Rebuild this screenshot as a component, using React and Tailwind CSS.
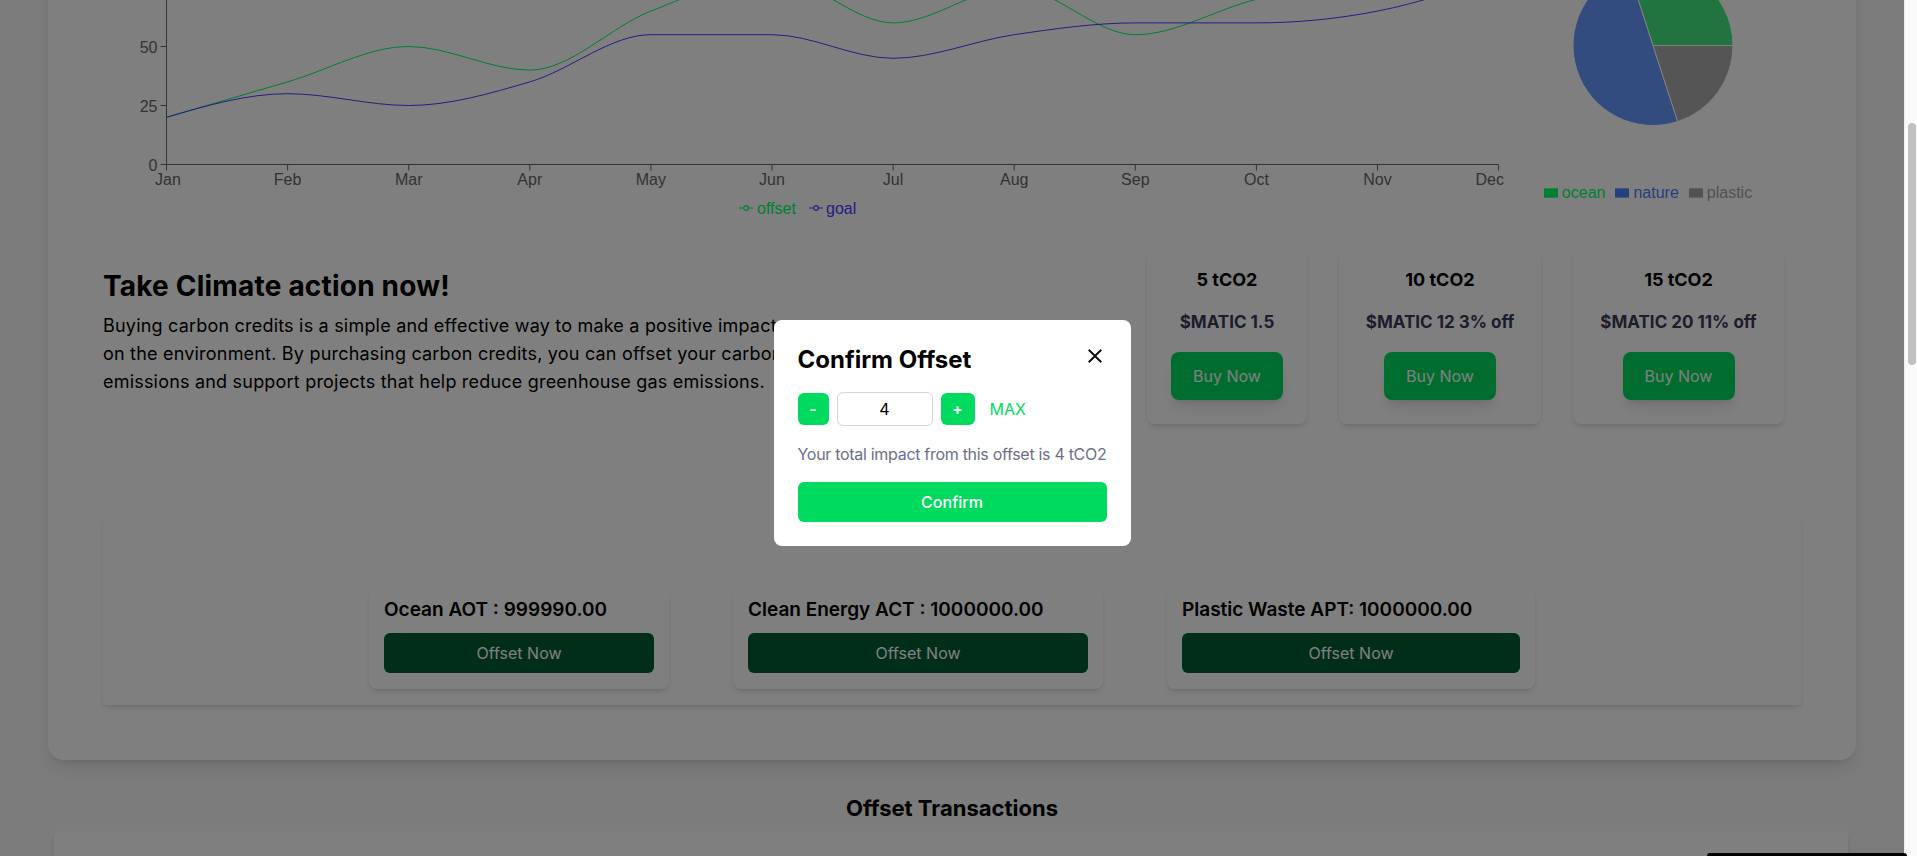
import React from "react";

const months = ["Jan", "Feb", "Mar", "Apr", "May", "Jun", "Jul", "Aug", "Sep", "Oct", "Nov", "Dec"];
const offsetData = [20, 35, 50, 40, 65, 80, 60, 75, 55, 70, 80, 90];
const goalData = [20, 30, 25, 35, 55, 55, 45, 55, 60, 60, 65, 80];
const X0 = 118.5;
const DX = 121.1;
const Y0 = 314.5;
const K = 2.36;
const px = (i) => X0 + i * DX;
const py = (v) => Y0 - v * K;

function monotonePath(vals) {
  const pts = vals.map((v, i) => [px(i), py(v)]);
  const n = pts.length;
  const s = [];
  for (let i = 0; i < n - 1; i++) s.push((pts[i + 1][1] - pts[i][1]) / (pts[i + 1][0] - pts[i][0]));
  const t = new Array(n).fill(0);
  for (let i = 1; i < n - 1; i++) {
    const h0 = pts[i][0] - pts[i - 1][0];
    const h1 = pts[i + 1][0] - pts[i][0];
    const s0 = s[i - 1];
    const s1 = s[i];
    const p = (s0 * h1 + s1 * h0) / (h0 + h1);
    t[i] = (Math.sign(s0) + Math.sign(s1)) * Math.min(Math.abs(s0), Math.abs(s1), 0.5 * Math.abs(p)) || 0;
  }
  t[0] = (3 * s[0] - t[1]) / 2;
  t[n - 1] = (3 * s[n - 2] - t[n - 2]) / 2;
  let d = `M${pts[0][0]},${pts[0][1]}`;
  for (let i = 0; i < n - 1; i++) {
    const dx = (pts[i + 1][0] - pts[i][0]) / 3;
    d += `C${pts[i][0] + dx},${pts[i][1] + dx * t[i]},${pts[i + 1][0] - dx},${pts[i + 1][1] - dx * t[i + 1]},${pts[i + 1][0]},${pts[i + 1][1]}`;
  }
  return d;
}

function LineChart() {
  const yTicks = [0, 25, 50, 75, 100];
  return (
    <svg width="1480" height="380" className="shrink-0" style={{ fontFamily: '"Liberation Sans", Arial, sans-serif' }}>
      {/* y axis */}
      <line x1={X0} y1={py(100)} x2={X0} y2={Y0} stroke="#666" strokeWidth="1" />
      {yTicks.map((v) => (
        <g key={v}>
          <line x1={X0 - 6} y1={py(v)} x2={X0} y2={py(v)} stroke="#666" />
          {v <= 50 && (
            <text x={X0 - 9} y={py(v) + 6} textAnchor="end" fontSize="16" fill="#666">
              {v}
            </text>
          )}
        </g>
      ))}
      {/* x axis */}
      <line x1={X0} y1={Y0} x2={px(11)} y2={Y0} stroke="#666" />
      {months.map((m, i) => (
        <g key={m}>
          <line x1={px(i)} y1={Y0} x2={px(i)} y2={Y0 + 6} stroke="#666" />
          <text
            x={i === 11 ? 1456 : i === 0 ? px(0) + 1.5 : px(i)}
            y={Y0 + 20}
            textAnchor={i === 11 ? "end" : "middle"}
            fontSize="16"
            fill="#666"
          >
            {m}
          </text>
        </g>
      ))}
      <path d={monotonePath(offsetData)} fill="none" stroke="#00ff66" strokeWidth="1" />
      <path d={monotonePath(goalData)} fill="none" stroke="#4a3aff" strokeWidth="1" />
      {/* legend */}
      <g transform="translate(691,351)">
        <path d="M0,7h4.67A2.33,2.33,0,1,1,9.33,7H14M9.33,7A2.33,2.33,0,1,1,4.67,7" fill="none" stroke="#00ff66" strokeWidth="1.2" />
      </g>
      <text x="709" y="363.5" fontSize="16" fill="#00ff66">offset</text>
      <g transform="translate(761,351)">
        <path d="M0,7h4.67A2.33,2.33,0,1,1,9.33,7H14M9.33,7A2.33,2.33,0,1,1,4.67,7" fill="none" stroke="#4a3aff" strokeWidth="1.2" />
      </g>
      <text x="778" y="363.5" fontSize="16" fill="#4a3aff">goal</text>
    </svg>
  );
}

function slice(cx, cy, r, a1, a2) {
  const rad = (a) => (a * Math.PI) / 180;
  const p = (a) => [cx + r * Math.cos(rad(a)), cy - r * Math.sin(rad(a))];
  const [x1, y1] = p(a1);
  const [x2, y2] = p(a2);
  const large = a2 - a1 > 180 ? 1 : 0;
  return `M${cx},${cy}L${x1},${y1}A${r},${r},0,${large},0,${x2},${y2}Z`;
}

function PieArea() {
  const cx = 125;
  const cy = 195.5;
  const r = 80;
  const legend = [
    { label: "ocean", color: "#00ff60" },
    { label: "nature", color: "#4c80ff" },
    { label: "plastic", color: "#a4a4a4" },
  ];
  return (
    <div className="w-[250px] shrink-0 flex flex-col items-center">
      <svg width="250" height="300">
        <path d={slice(cx, cy, r, 0, 108)} fill="#42e680" stroke="#fff" strokeWidth="1" />
        <path d={slice(cx, cy, r, 108, 288)} fill="#6698ff" stroke="#fff" strokeWidth="1" />
        <path d={slice(cx, cy, r, 288, 360)} fill="#aaaaaa" stroke="#fff" strokeWidth="1" />
      </svg>
      <div className="mt-[31px] flex items-center h-6 text-[16px]" style={{ fontFamily: '"Liberation Sans", Arial, sans-serif' }}>
        {legend.map((l) => (
          <span key={l.label} className="flex items-center mr-[10px]" style={{ color: l.color }}>
            <svg width="14" height="14" className="mr-1">
              <path d="M0,2.33h14v9.33h-14z" fill={l.color} />
            </svg>
            {l.label}
          </span>
        ))}
      </div>
    </div>
  );
}

function PriceCard({ w, title, price }) {
  return (
    <div className={`${w} bg-white rounded-lg shadow-md flex flex-col items-center pt-4 pb-6`}>
      <div className="text-lg leading-7 font-bold text-black">{title}</div>
      <div className="mt-4 text-[17px] leading-6 font-bold text-[#3a3a58] whitespace-nowrap">{price}</div>
      <button className="mt-[18px] w-28 h-12 rounded-lg bg-[#00da5f] text-white text-base shadow-lg">Buy Now</button>
    </div>
  );
}

function TokenCard({ w, title }) {
  return (
    <div className={`${w} bg-white rounded-lg shadow-md px-[15px] pt-[9px] pb-4`}>
      <div className="text-[19px] leading-7 font-semibold text-black whitespace-nowrap">{title}</div>
      <button className="mt-[9px] w-full h-10 rounded-md bg-[#005c30] text-white text-base">Offset Now</button>
    </div>
  );
}

export default function App() {
  return (
    <div className="relative w-[1917px] h-[856px] overflow-hidden flex" style={{ fontFamily: "Inter, 'Noto Sans', sans-serif" }}>
      <div className="relative w-[1904px] h-full overflow-hidden bg-[#f6f8f6] shrink-0">
        <div className="-mt-[150px]">
          {/* main card */}
          <div className="mx-12 bg-white rounded-2xl shadow-lg pb-[55px]">
            <div className="flex h-[380px]">
              <LineChart />
              <PieArea />
            </div>
            <div className="mt-5 flex items-start justify-between pl-[55px] pr-[72px]">
              <div className="mt-[19px] w-[700px]">
                <h2 className="text-[28px] leading-[35px] font-bold text-black tracking-[0.2px]">Take Climate action now!</h2>
                <p className="mt-2 text-lg leading-7 text-black tracking-[0.2px]">
                  Buying carbon credits is a simple and effective way to make a positive impact on the environment. By purchasing carbon credits, you can offset your carbon emissions and support projects that help reduce greenhouse gas emissions.
                </p>
              </div>
              <div className="flex gap-8">
                <PriceCard w="w-[160px]" title="5 tCO2" price="$MATIC 1.5" />
                <PriceCard w="w-[202px]" title="10 tCO2" price="$MATIC 12 3% off" />
                <PriceCard w="w-[211px]" title="15 tCO2" price="$MATIC 20 11% off" />
              </div>
            </div>
            <div className="mt-[93px] mx-[55px] bg-white shadow-md rounded-sm pt-[70px] pb-4 flex justify-center gap-16">
              <TokenCard w="w-[300px]" title="Ocean AOT : 999990.00" />
              <TokenCard w="w-[370px]" title="Clean Energy ACT : 1000000.00" />
              <TokenCard w="w-[368px]" title="Plastic Waste APT: 1000000.00" />
            </div>
          </div>
          <h3 className="mt-[34px] text-[22px] leading-7 font-bold text-center text-black">Offset Transactions</h3>
          <div className="mt-[9px] ml-[54px] mr-[56px] h-[200px] bg-white rounded-md shadow-md" />
        </div>

        {/* overlay */}
        <div className="absolute inset-0 bg-black/50" />

        {/* modal */}
        <div className="absolute inset-0 flex justify-center items-start pt-[320px]">
          <div className="w-[357px] bg-white rounded-lg p-6">
            <div className="flex items-start justify-between">
              <h2 className="text-2xl leading-8 font-bold text-black">Confirm Offset</h2>
              <svg width="24" height="24" viewBox="0 0 24 24">
                <path d="M19 6.41 17.59 5 12 10.59 6.41 5 5 6.41 10.59 12 5 17.59 6.41 19 12 13.41 17.59 19 19 17.59 13.41 12z" fill="#111" />
              </svg>
            </div>
            <div className="mt-4 flex items-center h-[34px]">
              <button className="w-[31px] h-8 rounded-md bg-[#00da5f] text-white font-semibold text-base">-</button>
              <input
                readOnly
                value="4"
                className="ml-2 w-[96px] h-[34px] border border-[#d6d6e0] rounded-md text-center text-base text-black outline-none"
              />
              <button className="ml-2 w-[34px] h-8 rounded-md bg-[#00da5f] text-white font-semibold text-base">+</button>
              <span className="ml-[15px] text-base text-[#00da5f]">MAX</span>
            </div>
            <p className="mt-4 text-base leading-6 text-[#6c6f86] whitespace-nowrap tracking-[-0.3px]">Your total impact from this offset is 4 tCO2</p>
            <button className="mt-4 w-full h-10 rounded-md bg-[#00da5f] text-white text-base font-medium">Confirm</button>
          </div>
        </div>
      </div>

      {/* scrollbar */}
      <div className="w-[13px] h-full bg-[#fafafa] border-l border-[#eeeeee]">
        <div className="ml-[3px] mt-[123px] w-[8px] h-[242px] rounded-full bg-[#c1c1c1]" />
      </div>

      {/* black element at bottom right */}
      <div className="absolute left-[1707px] bottom-0 w-[200px] h-[3px] bg-black rounded-t-md" />
    </div>
  );
}
